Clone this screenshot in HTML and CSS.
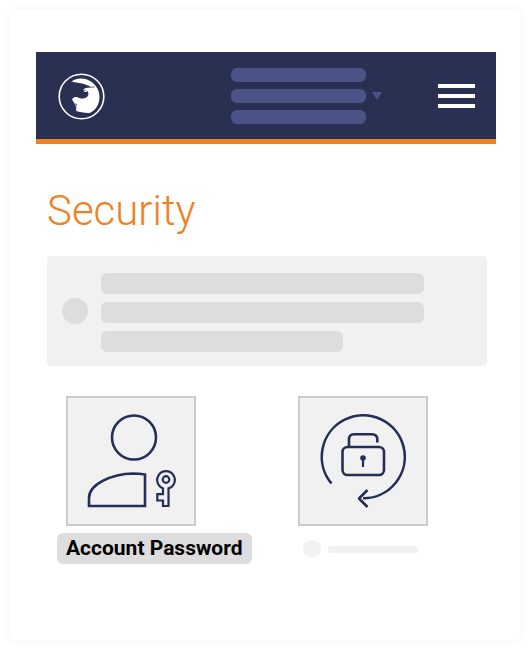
FILE: index.html
```html
<!DOCTYPE html>
<html lang="en">
<head>
<meta charset="utf-8">
<meta name="viewport" content="width=device-width, initial-scale=1">
<title>Security</title>
<link rel="stylesheet" href="styles.css">
</head>
<body>
<div class="card">
  <header class="topbar">
    <a class="logo" href="#" aria-label="Home">
      <svg viewBox="0 0 48 48" width="48" height="48" aria-hidden="true">
        <circle cx="24.500" cy="24.500" r="22.300" fill="none" stroke="#fff" stroke-width="1.600"/>
        <path fill="#fff" d="M14.500 9.500C18 7 24 5.500 30 7.500C37 10 42.500 17 42.500 25C42.500 33 38 39 32.500 41C28 41.300 23 40 19.200 39L19.200 35L17.300 31L15 27.500C15.800 25.300 17.500 24.600 20 25C22.500 26.500 25 27 28 26C31.200 25 32 22.500 31 20L29.800 18.800L29.500 20L27.500 20L26.300 17.500L29 15.700L34 14.800L27 12C23 10.500 18.500 10.800 14.500 9.500Z"/>
        <path d="M28.500 15.600L37.500 15" fill="none" stroke="#2a3052" stroke-width="0.700"/>
        <path fill="#2a3052" d="M18.200 31L20 32.500L19.700 34L18.700 33ZM27.300 17.800L28.300 17.800L28.500 19L27.600 19Z"/>
      </svg>
    </a>
    <button class="account" type="button" aria-label="Select account">
      <span class="account-lines"><span></span><span></span><span></span></span>
      <svg class="caret" viewBox="0 0 10 8" width="10" height="8" aria-hidden="true"><path fill="#4b5387" d="M0 0H10L5 8Z"/></svg>
    </button>
    <button class="menu" type="button" aria-label="Menu"><span></span><span></span><span></span></button>
  </header>
  <main class="content">
    <h1>Security</h1>
    <section class="notice">
      <span class="notice-dot"></span>
      <div class="notice-lines"><span></span><span></span><span class="short"></span></div>
    </section>
    <nav class="tiles">
      <a class="item" href="#">
        <span class="tile">
          <svg viewBox="0 0 130 130" width="130" height="130" fill="none" stroke="#262e58" stroke-width="2.600" aria-hidden="true">
            <circle cx="68" cy="41.500" r="22"/>
            <path d="M23 110V102C23 88 46 78 67 77.500Q73 77.500 79 78.500V110Z"/>
            <g stroke-width="2.200">
              <path d="M97.500 92.400A8.800 8.800 0 1 1 102.500 92.400V110H97V104.500H91.300V98.200H97V92"/>
              <circle cx="100" cy="83.500" r="3.300"/>
            </g>
          </svg>
        </span>
        <span class="label">Account Password</span>
      </a>
      <a class="item" href="#" aria-label="Reset lock">
        <span class="tile">
          <svg viewBox="0 0 130 130" width="130" height="130" fill="none" stroke="#262e58" stroke-width="2.600" stroke-linejoin="round" aria-hidden="true">
            <path d="M33.500 87.500A41.500 41.500 0 1 1 65 102.300"/>
            <path d="M69.500 94L61 102.500L69.500 111"/>
            <rect x="44.500" y="51" width="41.500" height="28" rx="5"/>
            <path d="M51 51V43.500Q51 38.300 56 38.300H74Q79.300 38.300 79.300 43.500V46.500"/>
            <path d="M65 63V71" stroke-width="2.200"/>
            <circle cx="65" cy="62" r="2.800" fill="#262e58" stroke="none"/>
          </svg>
        </span>
        <span class="placeholder"><span class="placeholder-dot"></span><span class="placeholder-line"></span></span>
      </a>
    </nav>
  </main>
</div>
</body>
</html>
```
FILE: styles.css
```css
* {
  box-sizing: border-box;
}

body {
  margin: 0;
  padding: 10px;
  min-height: 100vh;
  display: flex;
  background: #fff;
  font-family: Roboto, "Liberation Sans", sans-serif;
}

.card {
  flex: 1;
  min-width: 0;
  padding: 42px 24px 40px 26px;
  background: #fff;
  border-radius: 6px;
  box-shadow: 0 0 12px rgba(0, 0, 0, 0.05);
}

button {
  margin: 0;
  padding: 0;
  border: 0;
  background: none;
}

a {
  color: inherit;
  text-decoration: none;
}

.topbar {
  display: flex;
  align-items: center;
  padding: 16px 21px 15px;
  background: #2a3052;
  border-bottom: 5px solid #ee8122;
}

.logo,
.logo svg {
  display: block;
}

.account {
  display: flex;
  align-items: center;
  gap: 6px;
  margin-left: auto;
}

.account-lines {
  display: grid;
  gap: 7px;
}

.account-lines span {
  width: 135px;
  height: 14px;
  border-radius: 6px;
  background: #4b5387;
}

.menu {
  display: grid;
  gap: 6px;
  margin-left: 56px;
}

.menu span {
  width: 37px;
  height: 4px;
  background: #fff;
}

.content {
  padding: 42px 9px 0 11px;
}

h1 {
  margin: 0;
  color: #ee8122;
  font-size: 42px;
  font-weight: 300;
  line-height: 50px;
}

.notice {
  display: flex;
  align-items: center;
  gap: 13px;
  margin-top: 20px;
  padding: 14px 63px 14px 15px;
  border-radius: 4px;
  background: #f1f1f1;
}

.notice-dot {
  flex: none;
  width: 26px;
  height: 26px;
  border-radius: 50%;
  background: #ddd;
}

.notice-lines {
  flex: 1;
  display: grid;
  gap: 8px;
  padding-top: 3px;
}

.notice-lines span {
  height: 21px;
  border-radius: 6px;
  background: #ddd;
}

.notice-lines .short {
  width: 75%;
}

.tiles {
  display: grid;
  grid-template-columns: 1fr 1fr;
  gap: 34px;
  margin-top: 30px;
  padding-left: 10px;
}

.item {
  display: flex;
  flex-direction: column;
  align-items: flex-start;
}

.tile {
  margin-left: 9px;
  border: 2px solid #ccc;
  background: #f1f1f1;
}

.tile svg {
  display: block;
  margin: -2px;
}

.label {
  margin-top: 7px;
  padding: 0 9px;
  border-radius: 6px;
  background: #ddd;
  color: #000;
  font-size: 21px;
  font-weight: 700;
  line-height: 31px;
  white-space: nowrap;
}

.placeholder {
  display: flex;
  align-items: center;
  gap: 7px;
  margin: 14px 0 0 14px;
}

.placeholder-dot {
  width: 18px;
  height: 18px;
  border-radius: 50%;
  background: #f2f2f2;
}

.placeholder-line {
  width: 90px;
  height: 7px;
  border-radius: 3px;
  background: #f2f2f2;
}
```
